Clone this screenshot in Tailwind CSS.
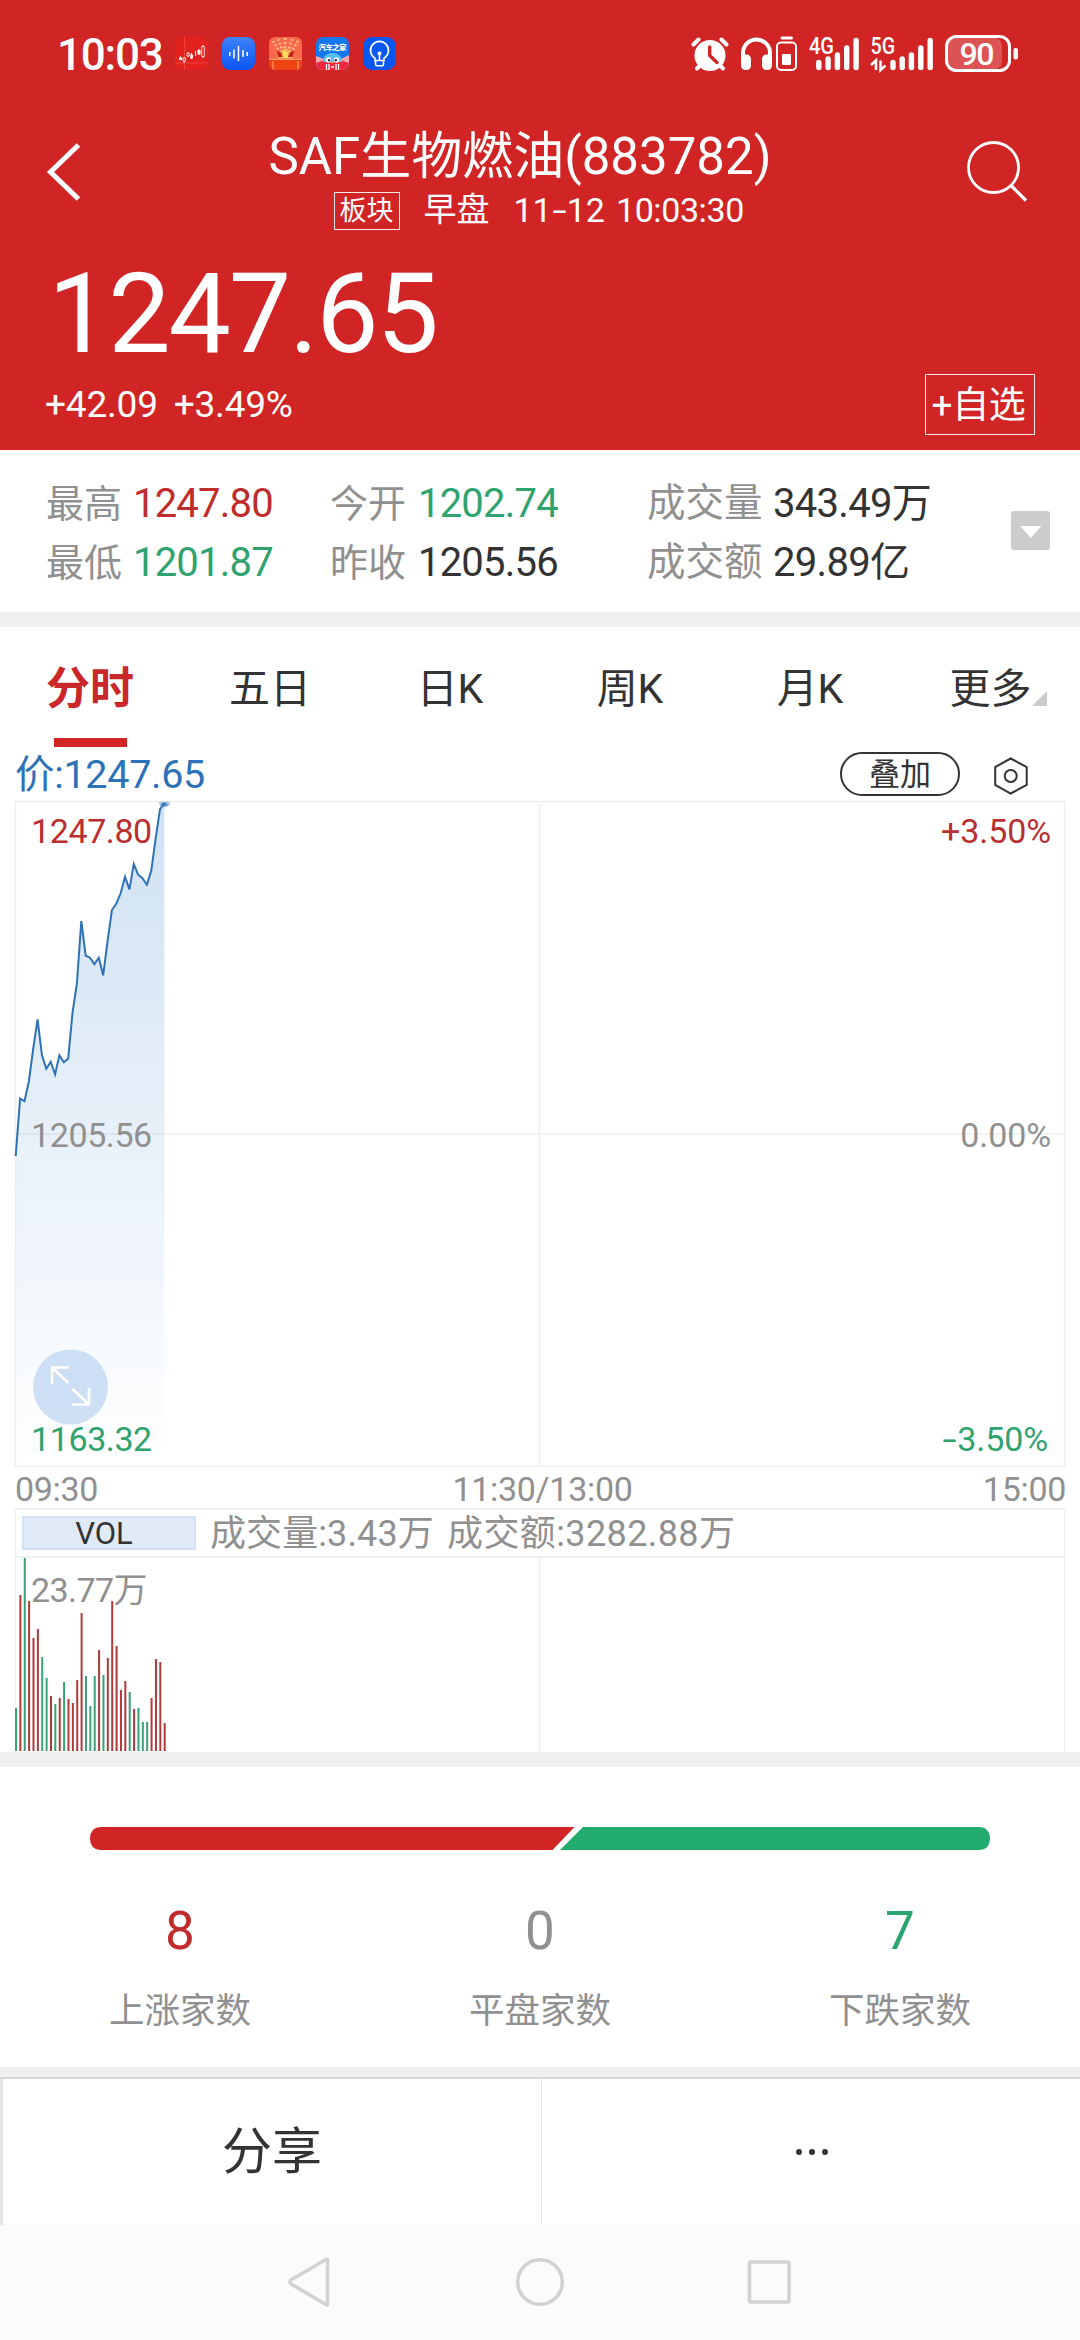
<!DOCTYPE html>
<html lang="zh-CN">
  <head>
    <meta charset="UTF-8" />
    <meta name="viewport" content="width=device-width, initial-scale=1.0" />
    <title>SAF生物燃油(883782)</title>
    <script src="https://cdn.jsdelivr.net/npm/@tailwindcss/browser@4"></script>
  </head>
  <body
    class="w-[1080px] h-[2340px] overflow-hidden bg-white text-[#333] leading-none font-['Roboto','Noto_Sans_CJK_SC',sans-serif]"
  >
    <header class="flex flex-col h-[450px] bg-[#d12425] text-white">
      <!-- status bar -->
      <div class="flex items-center justify-between h-[107px] pl-[57px] pr-[61px]">
        <div class="flex items-center">
          <div class="w-[118px] pt-[2px] text-[44px] font-medium tracking-[-1.2px]">10:03</div>
          <div class="flex gap-[14px]">
            <svg class="w-[33px] h-[33px]" viewBox="0 0 33 33">
              <rect width="33" height="33" rx="7" fill="#e3221f" />
              <path d="M9.5 0V33M0 26H33" stroke="#ef5048" stroke-width=".7" />
              <path d="M5.500 19.500V23M9 20V26M13 15V20M16.500 16V22M20.500 14V19M24 12V18M28 8V21" stroke="#fff" stroke-width="1" />
              <path d="M4 20.500h3v2.500h-3zM15.300 17.500h2.600v4h-2.600zM22.500 13h3v4.500h-3z" fill="#fff" />
              <path d="M8 21h2.500v3H8zM12 16h2.200v3H12zM26.700 9.500h2.600v10h-2.600z" fill="#e3221f" stroke="#fff" stroke-width=".8" />
            </svg>
            <svg class="w-[33px] h-[33px]" viewBox="0 0 33 33">
              <defs>
                <linearGradient id="voice" x1="0" y1="0" x2="0" y2="1">
                  <stop offset="0" stop-color="#3f82fb" />
                  <stop offset="1" stop-color="#0a55f4" />
                </linearGradient>
              </defs>
              <rect width="33" height="33" rx="8" fill="url(#voice)" />
              <path d="M7.800 15v4M12 12.500v9M16.500 9v15M21 13v7M25.200 15v4" stroke="#fff" stroke-width="1.500" />
            </svg>
            <svg class="w-[33px] h-[33px]" viewBox="0 0 33 33">
              <rect width="33" height="33" rx="6" fill="#f96a4a" />
              <path d="M4 4l8 13M9 2l5 13M16 1v12M23 2l-4 13M29 4l-7 12" stroke="#ffb98c" stroke-width="2.500" stroke-dasharray="2 2" />
              <path d="M16.500 11l6 3 3 5-4 4h-10l-4-4 3-5z" fill="#f7b25c" />
              <path d="M8 14c4 0 5 3 6 6h-5zM25 14c-4 0-5 3-6 6h5z" fill="#c2251c" />
              <ellipse cx="16.300" cy="18" rx="2.800" ry="4" fill="#ffd95a" />
              <path d="M0 21.500h33v5.500a6 6 0 0 1-6 6H6a6 6 0 0 1-6-6z" fill="#ee4413" />
              <path d="M0 22.200h33" stroke="#ff9b66" stroke-width="1.400" />
              <path d="M4 24v8M29 24v8" stroke="#ff8652" stroke-width="1.500" />
            </svg>
            <svg class="w-[33px] h-[33px]" viewBox="0 0 33 33">
              <defs>
                <clipPath id="auto"><rect width="33" height="33" rx="7" /></clipPath>
              </defs>
              <g clip-path="url(#auto)">
                <rect width="33" height="33" fill="#1377f0" />
                <path d="M0 19l8 3h17l8-4v15H0z" fill="#f3a4a9" />
                <path d="M0 26l9-3h15l9 3v7H0z" fill="#f0283e" />
                <path d="M7 25c0-6 4-9 9.500-9s9.500 3 9.500 9z" fill="#56bdf5" />
                <circle cx="12.500" cy="23" r="2.800" fill="#fff" />
                <circle cx="20.500" cy="23" r="2.800" fill="#fff" />
                <circle cx="13.200" cy="23.300" r="1.200" fill="#14315c" />
                <circle cx="19.800" cy="23.300" r="1.200" fill="#14315c" />
                <path d="M15 25h3l-1.500 2z" fill="#f2a33c" />
                <path d="M10.500 27v6M13 27v6M20 27v6M22.500 27v6M15 30h3" stroke="#fff" stroke-width="1.300" />
              </g>
              <text x="2.500" y="13" font-size="7.200" font-weight="900" fill="#fff" textLength="28">汽车之家</text>
            </svg>
            <svg class="w-[33px] h-[33px]" viewBox="0 0 33 33" fill="none" stroke="#fff" stroke-width="1.600">
              <rect width="33" height="33" rx="9" fill="#0757f2" stroke="none" />
              <path d="M12 23.500v-2.300a9 9 0 1 1 9 0v2.300zM12.500 24v3.200q0 1.500 1.500 1.500h5q1.500 0 1.500-1.500V24" />
              <path d="M16.500 17v6.500" />
              <circle cx="16.500" cy="16.500" r="1.200" fill="#fff" />
            </svg>
          </div>
        </div>
        <!-- alarm, headset, signals, battery -->
        <svg class="w-[328px] h-[54px]" viewBox="691 27 328 54" fill="#fff">
          <circle cx="710" cy="55.500" r="15.500" />
          <path d="M693.500 44.500l5-5M726.500 44.500l-5-5" stroke="#fff" stroke-width="4" stroke-linecap="round" />
          <path d="M697 68.500l4-4M723 68.500l-4-4" stroke="#fff" stroke-width="4" stroke-linecap="round" />
          <path d="M709.700 47v8.500l7.300 7" fill="none" stroke="#d12425" stroke-width="3.400" stroke-linecap="round" />
          <path d="M743 58v-5a13.500 13.500 0 0 1 27 0v5" fill="none" stroke="#fff" stroke-width="4" />
          <rect x="741" y="54.500" width="10" height="15.500" rx="4.500" />
          <rect x="762" y="54.500" width="10" height="15.500" rx="4.500" />
          <rect x="780.500" y="36.500" width="12.500" height="3" rx="1.500" />
          <rect x="777" y="42.500" width="19" height="27.500" rx="4" fill="none" stroke="#fff" stroke-width="2" />
          <rect x="782" y="54" width="9" height="11" rx="1" />
          <text x="809" y="53.500" font-size="23" font-weight="500" textLength="25" lengthAdjust="spacingAndGlyphs">4G</text>
          <path d="M818.800 62.500v5M828.100 59v8.500M837.400 55v12.500M846.700 48v19.500M856.100 40.500v27" stroke="#fff" stroke-width="5.400" stroke-linecap="round" />
          <text x="870.500" y="53.500" font-size="23" font-weight="500" textLength="24.500" lengthAdjust="spacingAndGlyphs">5G</text>
          <path d="M871 65l5-4.500V70M880.500 60.500V70l5-4.500" fill="none" stroke="#fff" stroke-width="2.600" />
          <path d="M893 62.500v5M902.200 59v8.500M911.400 55v12.500M920.800 48v19.500M930.200 40.500v27" stroke="#fff" stroke-width="5.400" stroke-linecap="round" />
          <rect x="948" y="38" width="54" height="31" rx="7" fill="#dc5354" />
          <rect x="946.500" y="36.500" width="63" height="34" rx="10" fill="none" stroke="#fff" stroke-width="3" />
          <rect x="1013.500" y="48" width="4.500" height="11.500" rx="2" />
          <text x="977" y="65" font-size="32" font-weight="500" text-anchor="middle" textLength="35">90</text>
        </svg>
      </div>

      <!-- title -->
      <div class="flex justify-between h-[130px] pl-[45px] pr-[51px]">
        <svg class="w-[40px] h-[60px] mt-[35px]" viewBox="45 142 40 60" fill="none" stroke="#fff" stroke-width="5">
          <path d="M78.500 145L50.500 172l28 27" />
        </svg>
        <div class="flex flex-col w-[505px]">
          <h1 class="h-[60px] mt-[20px] ml-[-4px] text-[51px] leading-[60px] whitespace-nowrap">SAF生物燃油(883782)</h1>
          <div class="flex items-center h-[38px] mt-[5px] ml-[61px] whitespace-nowrap">
            <span class="w-[66px] h-[38px] border border-white/90 text-center text-[27px] leading-[37px]">板块</span>
            <span class="ml-[24px] mb-[3px] text-[33px]">早盘</span>
            <span class="ml-[24px] mb-[3px] text-[34px]">11</span>
            <span class="w-[15px] mb-[3px] text-center scale-x-150 text-[34px]">-</span>
            <span class="mb-[3px] text-[34px]">12</span>
            <span class="ml-[11px] mb-[3px] text-[34px] tracking-[-0.4px]">10:03:30</span>
          </div>
        </div>
        <svg class="w-[64px] h-[64px] mt-[33px]" viewBox="965 140 64 64" fill="none" stroke="#fff" stroke-width="2.800">
          <circle cx="993.500" cy="167.500" r="25" />
          <path d="M1011 185.500l15 15" stroke-width="3.200" />
        </svg>
      </div>

      <div class="mt-[32px] ml-[48px] text-[111px] leading-[90px] tracking-[-2.1px]">1247.65</div>
      <div class="flex items-center justify-between h-[61px] mt-[15px] pl-[45px] pr-[45px]">
        <div class="flex gap-[16px] text-[37px] tracking-[-0.2px]">
          <span>+42.09</span>
          <span>+3.49%</span>
        </div>
        <button class="w-[110px] h-[61px] border border-white/90 pt-[2px] pr-[3px] text-[37px] leading-none whitespace-nowrap tracking-[-0.3px]">+自选</button>
      </div>
    </header>

    <!-- quote summary -->
    <section class="flex h-[162px] pt-[24px] pl-[46px]">
      <div class="grid grid-cols-[284px_317px_364px] h-[118px] grid-rows-2 items-center text-[40px] whitespace-nowrap">
        <div class="flex items-center"><span class="w-[87px] text-[38px] text-[#909090]">最高</span><span class="text-[#bf2c2c] tracking-[-0.8px]">1247.80</span></div>
        <div class="flex items-center"><span class="w-[88px] text-[38px] text-[#909090]">今开</span><span class="text-[#2fa36f] tracking-[-0.8px]">1202.74</span></div>
        <div class="flex items-center"><span class="w-[126px] text-[38.500px] text-[#909090]">成交量</span><span class="tracking-[-0.7px]">343.49万</span></div>
        <div class="flex items-center"><span class="w-[87px] text-[38px] text-[#909090]">最低</span><span class="text-[#2fa36f] tracking-[-0.8px]">1201.87</span></div>
        <div class="flex items-center"><span class="w-[88px] text-[38px] text-[#909090]">昨收</span><span class="tracking-[-0.8px]">1205.56</span></div>
        <div class="flex items-center"><span class="w-[126px] text-[38.500px] text-[#909090]">成交额</span><span class="tracking-[-0.7px]">29.89亿</span></div>
      </div>
      <svg class="w-[39px] h-[39px] mt-[37px]" viewBox="0 0 39 39">
        <rect width="39" height="39" rx="3" fill="#ccc" />
        <path d="M9.300 15h21L19.800 27z" fill="#fff" />
      </svg>
    </section>

    <div class="h-[15px] bg-[#f0f0f0]"></div>

    <!-- period tabs -->
    <nav class="grid grid-cols-6 h-[120px] text-[41px] leading-[124px] text-center">
      <div class="flex flex-col items-center text-[#c92729] font-bold text-[44px]">
        <span class="h-[111px]">分时</span>
        <span class="w-[73px] h-[9px] bg-[#d12425]"></span>
      </div>
      <div>五日</div>
      <div>日K</div>
      <div>周K</div>
      <div>月K</div>
      <div class="flex justify-center pl-[16px]">
        <span>更多</span>
        <svg class="w-[15px] h-[15px] mt-[64px]" viewBox="0 0 15 15"><path d="M15 0v15H0z" fill="#ccc" /></svg>
      </div>
    </nav>

    <div class="flex items-center h-[54px] pl-[15px]">
      <div class="w-[825px] pt-[2px] text-[39.500px] tracking-[-0.3px] text-[#2d72b8]">价:1247.65</div>
      <div class="w-[120px] h-[44px] border-2 border-[#333] rounded-full text-center text-[31px] leading-[42px]">叠加</div>
      <svg class="w-[36px] h-[40px] ml-[33px] mt-[4px]" viewBox="993 756 36 40" fill="none" stroke="#333" stroke-width="2">
        <path d="M1010.700 758.500l16 8.500v17.800l-16 8.700-15.500-8.700V767z" />
        <circle cx="1010.700" cy="776" r="6" />
      </svg>
    </div>

    <!-- intraday chart -->
    <section class="relative w-[1050px] h-[667px] ml-[15px] text-[34px] tracking-[-0.4px]">
      <svg class="block w-[1050px] h-[667px] overflow-visible" viewBox="15 801 1050 667">
        <defs>
          <linearGradient id="fill" gradientUnits="userSpaceOnUse" x1="0" y1="801" x2="0" y2="1466">
            <stop offset="0" stop-color="#2878c8" stop-opacity=".22" />
            <stop offset="1" stop-color="#2878c8" stop-opacity="0" />
          </linearGradient>
          <radialGradient id="glow">
            <stop offset="0" stop-color="#2d72b8" />
            <stop offset="1" stop-color="#2d72b8" stop-opacity=".25" />
          </radialGradient>
        </defs>
        <path d="M15.500 801.500h1049v665h-1049zM539.500 802v664M16 1134h1048" fill="none" stroke="#f0f0f0" stroke-width="1.600" />
        <polygon id="area" fill="url(#fill)" />
        <polyline id="line" fill="none" stroke="#2d72b8" stroke-width="2" />
        <path d="M158.500 801.500h12a6 6 0 0 1-12 0z" fill="url(#glow)" />
        <circle cx="70.500" cy="1387" r="37.500" fill="#bdd6f0" fill-opacity=".75" />
        <path d="M52 1384v-16.500h17M52.500 1368l16 15M89 1388v16.500H72M88.500 1404l-16-15" fill="none" stroke="#fff" stroke-width="2.600" />
      </svg>
      <span class="absolute left-[16px] top-[13px] text-[#b92f2f]">1247.80</span>
      <span class="absolute left-[16px] top-[317px] text-[#909090]">1205.56</span>
      <span class="absolute left-[16px] top-[621px] text-[#2fa36f]">1163.32</span>
      <span class="absolute right-[14px] top-[13px] tracking-[-0.1px] text-[#b92f2f]">+3.50%</span>
      <span class="absolute right-[14px] top-[317px] tracking-[-0.1px] text-[#909090]">0.00%</span>
      <span class="absolute right-[17px] top-[621px] flex tracking-[-0.1px] text-[#2fa36f]"><i class="not-italic w-[15px] text-center scale-x-150">-</i>3.50%</span>
    </section>
    <div class="grid grid-cols-3 items-center h-[40px] pt-px pl-[15px] pr-[14px] text-[34px] tracking-[-0.3px] text-[#909090]">
      <span>09:30</span>
      <span class="pl-[4px] text-center">11:30/13:00</span>
      <span class="text-right">15:00</span>
    </div>

    <!-- volume -->
    <section class="w-[1050px] h-[244px] ml-[15px] border-t-2 border-x border-[#f0f0f0]">
      <div class="flex items-center h-[48px] pl-[6px] border-b-2 border-[#f0f0f0] text-[36px] text-[#909090] whitespace-nowrap">
        <div class="w-[174px] h-[34px] mr-[14px] pr-[10px] bg-[#e1ebf8] border-2 border-[#d3e0f7] text-[#333] text-center text-[31px] leading-[32px]">VOL</div>
        <span class="w-[237px] pt-[2px] tracking-[0.1px]">成交量:3.43万</span>
        <span class="pt-[2px] tracking-[0.4px]">成交额:3282.88万</span>
      </div>
      <div class="relative h-[194px]">
        <svg class="absolute left-[-1px] top-0 w-[1050px] h-[194px]" viewBox="15 1558 1050 194">
          <path d="M539.500 1558v194" stroke="#f0f0f0" stroke-width="1.600" />
          <g id="bars"></g>
        </svg>
        <span class="absolute left-[15px] top-[15px] text-[34px] tracking-[-0.6px] text-[#909090]">23.77万</span>
      </div>
    </section>

    <div class="h-[15px] bg-[#f0f0f0]"></div>

    <!-- advance / decline -->
    <section class="h-[300px] pt-[60px]">
      <svg class="block w-[900px] h-[23px] mx-auto" viewBox="0 0 900 23">
        <path d="M10 0H484.500L462.500 23H10Q0 22 0 11.500T10 0z" fill="#d12425" />
        <path d="M493 0H890Q900 1 900 11.500T890 23H470z" fill="#21ab6f" />
      </svg>
      <div class="grid grid-cols-3 mt-[55px] text-center text-[53px]">
        <span class="text-[#c22b2c]">8</span>
        <span class="text-[#909090]">0</span>
        <span class="text-[#2ba56f]">7</span>
      </div>
      <div class="grid grid-cols-3 mt-[35px] pt-px text-center text-[35.500px] text-[#909090]">
        <span>上涨家数</span>
        <span>平盘家数</span>
        <span>下跌家数</span>
      </div>
    </section>

    <div class="h-[12px] bg-[#f0f0f0] border-b-2 border-[#d8d8d8]"></div>

    <div class="grid grid-cols-[541px_539px] h-[145px]">
      <div class="border-l-3 border-[#e6e6e6] text-center text-[50px] leading-[146px]">分享</div>
      <div class="flex items-center justify-center gap-[7px] pl-[2px] border-l border-[#e6e6e6]">
        <span class="size-[6px] rounded-full bg-[#333]"></span>
        <span class="size-[6px] rounded-full bg-[#333]"></span>
        <span class="size-[6px] rounded-full bg-[#333]"></span>
      </div>
    </div>

    <!-- system navigation -->
    <footer class="h-[116px] bg-[#fbfbfb]">
      <svg class="block w-[1080px] h-[116px]" viewBox="0 2224 1080 116" fill="none" stroke="#d2d2d2" stroke-width="3.600" stroke-linejoin="round">
        <path d="M327.500 2260v44q0 2-1.500 .5L291 2284q-2-2 0-4l35-20.500q1.500-1 1.500 .5z" />
        <circle cx="540" cy="2282" r="22.300" />
        <rect x="749.500" y="2262" width="39.500" height="40" rx="1.500" />
      </svg>
    </footer>

    <script>
      // one point per minute since 09:30
      const step = 4.373;
      const prices = [
        1156, 1098.7, 1101.3, 1081.7, 1049, 1019.3, 1055, 1068.7, 1061.7, 1074.3,
        1055.3, 1062.3, 1058.7, 1012.3, 983.3, 921, 955.7, 957.7, 964.3, 957.7,
        975.3, 941.3, 910, 903.7, 893.3, 876.7, 889.3, 864, 874.7, 878.3,
        884.7, 870.7, 838.3, 809.3, 802.7,
      ];
      const points = prices.map((y, i) => `${15.7 + i * step},${y}`).join(" ");
      document.querySelector("#line").setAttribute("points", points);
      document
        .querySelector("#area")
        .setAttribute("points", `15.7,1466 ${points} 164.4,1466`);

      // negative means the minute closed lower
      const volumes = [
        -43, 156, -193, 150, 113, 122, -94, -73, 55, -47, 53, -69, 52, 48, 71,
        138, -75, -45, -75, 101, -76, 93, 150, 105, 61, 70, -59, 42, -43, -29,
        -29, 53, 92, 89, 28,
      ];
      document.querySelector("#bars").innerHTML = volumes
        .map((v, i) => {
          const h = Math.abs(v);
          const color = v < 0 ? "#3aa076" : "#b03a3a";
          return `<rect x="${15 + i * step}" y="${1751 - h}" width="2" height="${h}" fill="${color}" />`;
        })
        .join("");
    </script>
  </body>
</html>
